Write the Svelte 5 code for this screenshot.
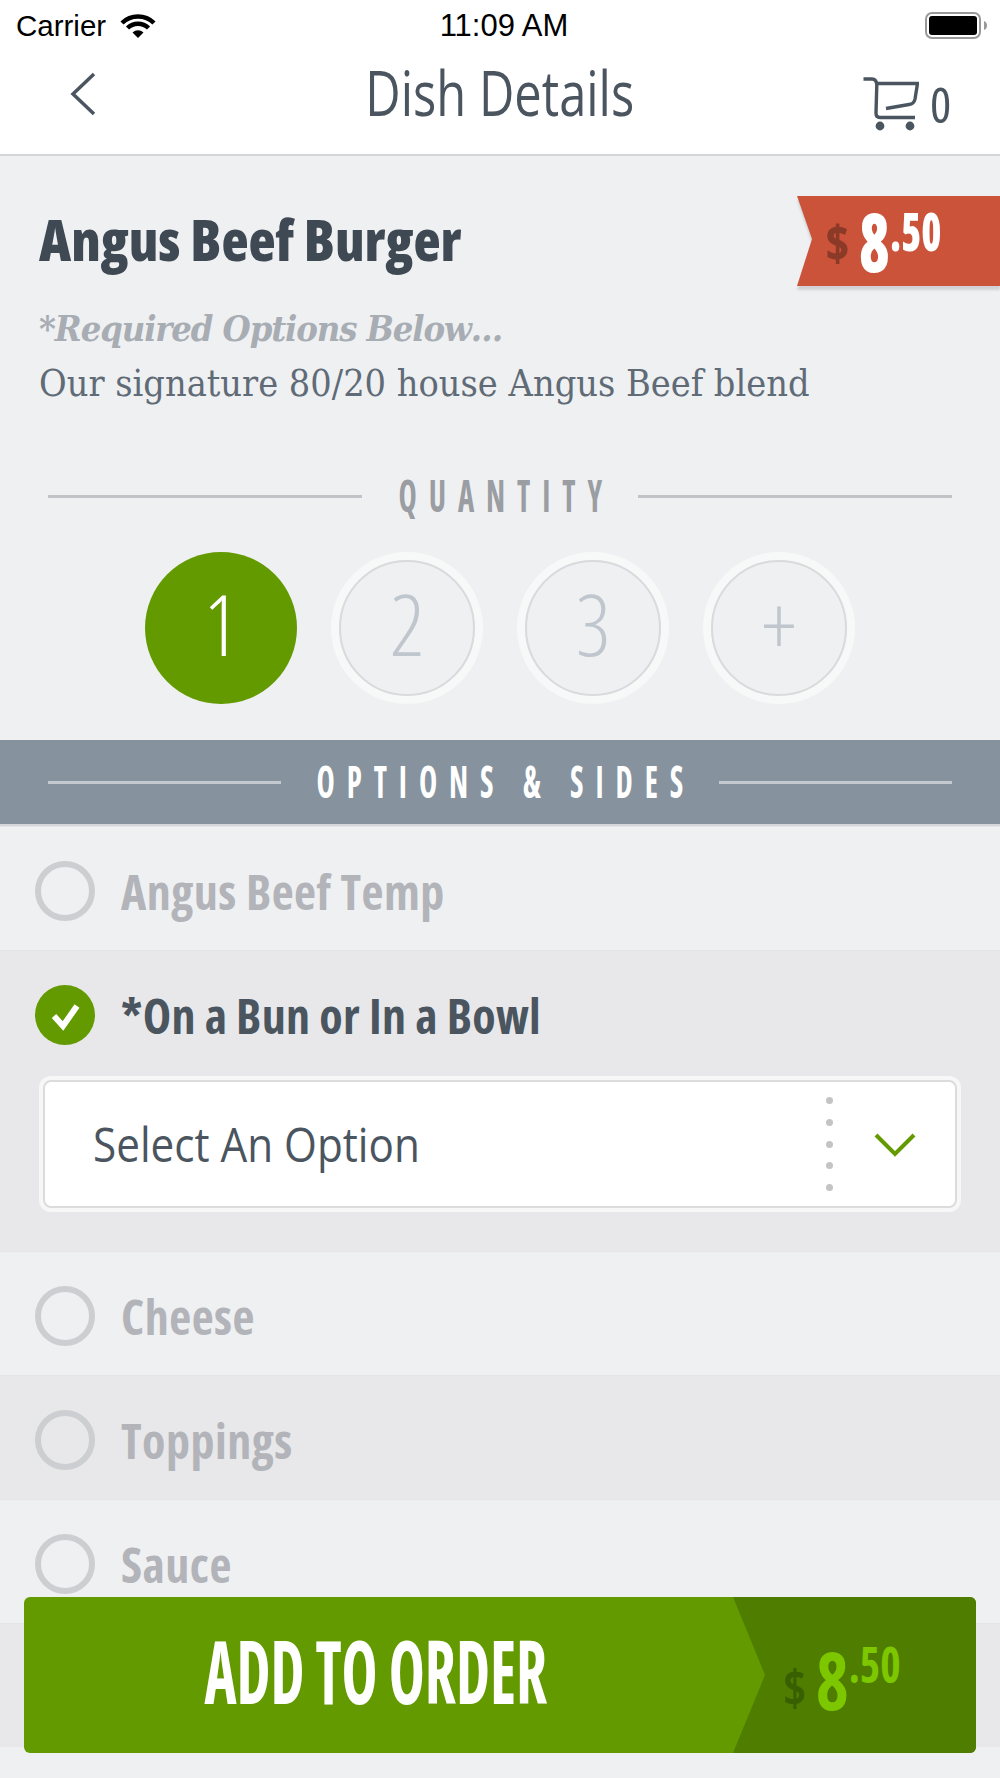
<script>
  let qty = 1;
  const quantities = ["1", "2", "3", "+"];
  const options = [
    { label: "Angus Beef Temp" },
    { label: "*On a Bun or In a Bowl", checked: true },
    { label: "Cheese" },
    { label: "Toppings", shade: true },
    { label: "Sauce" },
    { label: "", shade: true }
  ];
</script>

<div class="screen">
  <div class="status">
    <div class="carrier">
      <span>Carrier</span>
      <svg class="wifi" width="36" height="24" viewBox="0 0 36 24">
        <path d="M2 9 A23 23 0 0 1 34 9" fill="none" stroke="#000" stroke-width="4.5" />
        <path d="M7.5 14 A15 15 0 0 1 28.5 14" fill="none" stroke="#000" stroke-width="4.5" />
        <path d="M12.5 18.5 A8 8 0 0 1 23.5 18.5 L18 24 Z" fill="#000" />
      </svg>
    </div>
    <span class="time">11:09 AM</span>
    <svg class="battery" width="63" height="28" viewBox="0 0 63 28">
      <rect x="1" y="1" width="54" height="25" rx="6" fill="none" stroke="#999" stroke-width="2" />
      <rect x="4" y="4" width="48" height="19" rx="3" fill="#000" />
      <path d="M59 9 q3 1 3 4.5 q0 3.5 -3 4.5 Z" fill="#999" />
    </svg>
  </div>

  <header>
    <svg class="back" width="28" height="44" viewBox="0 0 28 44">
      <path d="M25 2 L4 22 L25 42" fill="none" stroke="#4a5560" stroke-width="3.5" />
    </svg>
    <h1>Dish Details</h1>
    <div class="cart">
      <svg width="56" height="56" viewBox="0 0 56 56">
        <path d="M0.5 3 H9 Q13.5 3 13.8 9 L13 37 Q13 41.5 17 41.5 H52" fill="none" stroke="#4a5560" stroke-width="3.4" />
        <path d="M14 7.5 H54.5 L52 23 Q51 28 46 28.5 L23 32.5" fill="none" stroke="#4a5560" stroke-width="3.4" />
        <circle cx="17" cy="50" r="4.4" fill="#4a5560" />
        <circle cx="47" cy="50" r="4.4" fill="#4a5560" />
      </svg>
      <span>0</span>
    </div>
  </header>

  <section class="dish">
    <div class="ribbon-wrap">
      <div class="ribbon">
        <span class="dollar">$</span>
        <span class="nums"><span class="big">8</span><span class="cents">.50</span></span>
      </div>
    </div>
    <h2>Angus Beef Burger</h2>
    <p class="required">*Required Options Below…</p>
    <p class="desc">Our signature 80/20 house Angus Beef blend</p>
  </section>

  <div class="rule qty-rule"><span>QUANTITY</span></div>

  <div class="quantity">
    {#each quantities as q, i}
      <button class="circle" class:on={qty === i + 1} on:click={() => (qty = i + 1)}>{q}</button>
    {/each}
  </div>

  <div class="options-bar">
    <div class="rule light"><span>OPTIONS &amp; SIDES</span></div>
  </div>

  {#each options as opt}
    <div class="row" class:shade={opt.shade || opt.checked}>
      <div class="row-head">
        {#if opt.checked}
          <svg class="radio" width="60" height="60" viewBox="0 0 60 60">
            <circle cx="30" cy="30" r="30" fill="#639a00" />
            <path d="M19 31 L28 41 L42 21" fill="none" stroke="#fff" stroke-width="6" />
          </svg>
        {:else if opt.label}
          <span class="radio empty"></span>
        {/if}
        <span class="label" class:active={opt.checked}>{opt.label}</span>
      </div>
      {#if opt.checked}
        <div class="select">
          <span class="select-text">Select An Option</span>
          <div class="dots">
            {#each [1, 2, 3, 4, 5] as d}
              <i data-d={d}></i>
            {/each}
          </div>
          <svg class="chev" width="42" height="25" viewBox="0 0 42 25">
            <path d="M2 2 L21 21 L40 2" fill="none" stroke="#639a00" stroke-width="4" />
          </svg>
        </div>
      {/if}
    </div>
  {/each}

  <button class="add">
    <span class="add-text"><span>ADD TO ORDER</span></span>
    <span class="add-price">
      <span class="dollar">$</span>
      <span class="nums"><span class="big">8</span><span class="cents">.50</span></span>
    </span>
  </button>
</div>

<style>
  :global(body) {
    margin: 0;
    background: #eff0f2;
  }

  .screen {
    position: relative;
    width: 1000px;
    height: 1778px;
    overflow: hidden;
    background: #eff0f2;
    font-family: "Open Sans", sans-serif;
    font-stretch: 75%;
  }

  .status {
    height: 50px;
    background: #fff;
    display: flex;
    align-items: center;
    justify-content: space-between;
    padding: 1px 12px 0 16px;
    box-sizing: border-box;
    font-family: "Liberation Sans", sans-serif;
    font-stretch: normal;
    font-size: 29.5px;
    color: #000;
  }

  .carrier {
    display: flex;
    align-items: center;
    gap: 14px;
    width: 300px;
  }

  .time {
    font-size: 31px;
    margin-left: 4px;
  }

  .battery {
    width: 63px;
    margin-left: 237px;
  }

  header {
    height: 104px;
    background: #fff;
    border-bottom: 2px solid #d3d5d7;
    display: flex;
    align-items: center;
    justify-content: center;
    position: relative;
  }

  h1 {
    margin: 0;
    font-size: 62px;
    font-weight: 400;
    font-stretch: 96%;
    color: #4a5560;
    line-height: 1;
    position: relative;
    top: -10px;
    transform: scaleX(0.787);
  }

  .back {
    position: absolute;
    left: 69px;
    top: 22px;
  }

  .cart {
    position: absolute;
    left: 863px;
    top: 20px;
    display: flex;
    align-items: center;
    gap: 11px;
    color: #4a5560;
    font-size: 50px;
    font-weight: 500;
  }

  .dish {
    height: 284px;
    padding: 0 0 0 39px;
    position: relative;
    box-sizing: border-box;
  }

  .ribbon-wrap {
    position: absolute;
    left: 797px;
    top: 40px;
    filter: drop-shadow(0 4px 1px rgba(0, 0, 0, 0.12));
  }

  .ribbon {
    width: 203px;
    height: 90px;
    background: #cb533a;
    clip-path: polygon(0 0, 100% 0, 100% 100%, 0 100%, 15px 43px);
    color: #fff;
    display: flex;
    align-items: flex-start;
    padding-left: 28px;
    box-sizing: border-box;
    font-weight: 800;
  }

  .dollar {
    font-size: 50px;
    color: #8c3a28;
    line-height: 1;
    margin-top: 21px;
  }

  .nums {
    display: flex;
    align-items: flex-start;
    margin-left: 9px;
    transform: scaleX(0.77);
    transform-origin: left top;
  }

  .big {
    font-size: 81px;
    line-height: 1;
    margin-top: 4px;
  }

  .cents {
    font-size: 53px;
    line-height: 1;
    margin-top: 8px;
  }

  h2 {
    margin: 0;
    padding-top: 55px;
    font-size: 56px;
    line-height: 1;
    font-weight: 800;
    color: #3f4953;
  }

  .required,
  .desc {
    margin: 0;
    font-family: "DejaVu Serif", serif;
    font-stretch: condensed;
    line-height: 55px;
  }

  .required {
    margin-top: 34px;
    font-size: 36px;
    letter-spacing: -1.1px;
    font-style: italic;
    font-weight: 700;
    color: #a7adb3;
  }

  .desc {
    font-size: 37.5px;
    color: #5f6b76;
  }

  .rule {
    display: flex;
    align-items: center;
    padding: 0 48px;
    height: 38px;
    font-size: 44px;
    font-weight: 700;
    color: #9a9da2;
  }

  .rule::before,
  .rule::after {
    content: "";
    flex: 1;
    height: 3px;
    background: #c0c3c7;
  }

  .rule span {
    display: inline-block;
    transform: translateY(-1px) scaleX(0.7);
    letter-spacing: 17px;
    padding-left: 17px;
    margin: 0 -24px;
  }

  .qty-rule {
    margin-top: 37px;
  }

  .rule.light {
    color: #fff;
  }

  .rule.light span {
    letter-spacing: 17px;
    padding-left: 17px;
    margin: 0 -59.5px;
  }

  .rule.light::before,
  .rule.light::after {
    background: #c3c9ce;
  }

  .quantity {
    display: flex;
    justify-content: center;
    gap: 34px;
    margin-top: 37px;
  }

  .circle {
    width: 136px;
    height: 136px;
    margin: 8px;
    border-radius: 50%;
    box-sizing: border-box;
    border: 2px solid #d8dadc;
    box-shadow: 0 0 0 8px #f7f8f8;
    background: transparent;
    color: #c0c6cd;
    font-family: inherit;
    font-stretch: 80%;
    font-size: 85px;
    font-weight: 300;
    line-height: 1;
    padding: 0 0 10px;
  }

  .circle.on {
    width: 152px;
    height: 152px;
    margin: 0;
    background: #639a00;
    border: none;
    box-shadow: none;
    color: #fff;
  }

  .options-bar {
    margin-top: 36px;
    height: 84px;
    background: #86939e;
    display: flex;
    align-items: center;
    border-bottom: 2px solid #d3d6da;
  }

  .options-bar .rule {
    flex: 1;
  }

  .row {
    height: 124px;
    box-sizing: border-box;
    border-top: 1px solid #e4e5e7;
  }

  .row.shade {
    background: #e8e8ea;
  }

  .row:has(.select) {
    height: 301px;
  }

  .row-head {
    display: flex;
    align-items: center;
    gap: 26px;
    padding: 33px 0 0 35px;
  }

  .radio {
    width: 60px;
    height: 60px;
    flex: none;
    box-sizing: border-box;
  }

  .radio.empty {
    border: 6.5px solid #ccced1;
    border-radius: 50%;
  }

  .label {
    font-size: 48px;
    font-weight: 700;
    letter-spacing: 0.5px;
    color: #b2b4b9;
    line-height: 60px;
    padding-top: 2px;
  }

  .label.active {
    color: #4a5560;
    letter-spacing: 0.3px;
  }

  .select {
    margin: 34px 43px 0;
    height: 128px;
    box-sizing: border-box;
    background: #fff;
    border: 2px solid #dcdcdc;
    border-radius: 8px;
    box-shadow: 0 0 0 4px #f7f7f8;
    display: flex;
    align-items: center;
    padding: 0 0 2px 48px;
    font-size: 48px;
    font-weight: 400;
    font-stretch: 96%;
    color: #4a5560;
    position: relative;
  }

  .select-text {
    display: inline-block;
    transform: scaleX(0.88);
    transform-origin: left center;
  }

  .dots {
    position: absolute;
    left: 781px;
    top: 15px;
    height: 94px;
    display: flex;
    flex-direction: column;
    justify-content: space-between;
  }

  .dots i {
    display: block;
    width: 7px;
    height: 7px;
    border-radius: 50%;
    background: #c4c4c4;
  }

  .chev {
    position: absolute;
    left: 829px;
    top: 51px;
  }

  .add {
    position: absolute;
    left: 24px;
    top: 1597px;
    width: 952px;
    height: 156px;
    border: none;
    border-radius: 6px;
    background: #639a00;
    padding: 0;
    overflow: hidden;
    display: flex;
    font-family: inherit;
    font-stretch: inherit;
    color: #fff;
  }

  .add-text {
    flex: 1;
    padding-right: 248px;
    padding-top: 30px;
    font-size: 87px;
    font-weight: 700;
    line-height: 1;
    text-align: center;
  }

  .add-text span {
    display: inline-block;
    transform: scaleX(0.7);
  }

  .add-price {
    position: absolute;
    left: 709px;
    top: 0;
    width: 243px;
    height: 156px;
    background: #4f7d00;
    clip-path: polygon(0 0, 100% 0, 100% 100%, 0 100%, 32px 78px);
    box-sizing: border-box;
    padding-left: 50px;
    padding-top: 44px;
    display: flex;
    align-items: flex-start;
    font-weight: 700;
  }

  .add-price .dollar {
    color: #385f00;
  }

  .add-price .nums {
    margin-left: 10px;
    margin-top: -2px;
    transform: scaleX(0.87);
  }

  .add-price .big,
  .add-price .cents {
    color: #7cc700;
    margin-top: 0;
  }

  .add-price .big {
    font-size: 80px;
  }

  .add-price .cents {
    font-size: 50px;
  }
</style>
